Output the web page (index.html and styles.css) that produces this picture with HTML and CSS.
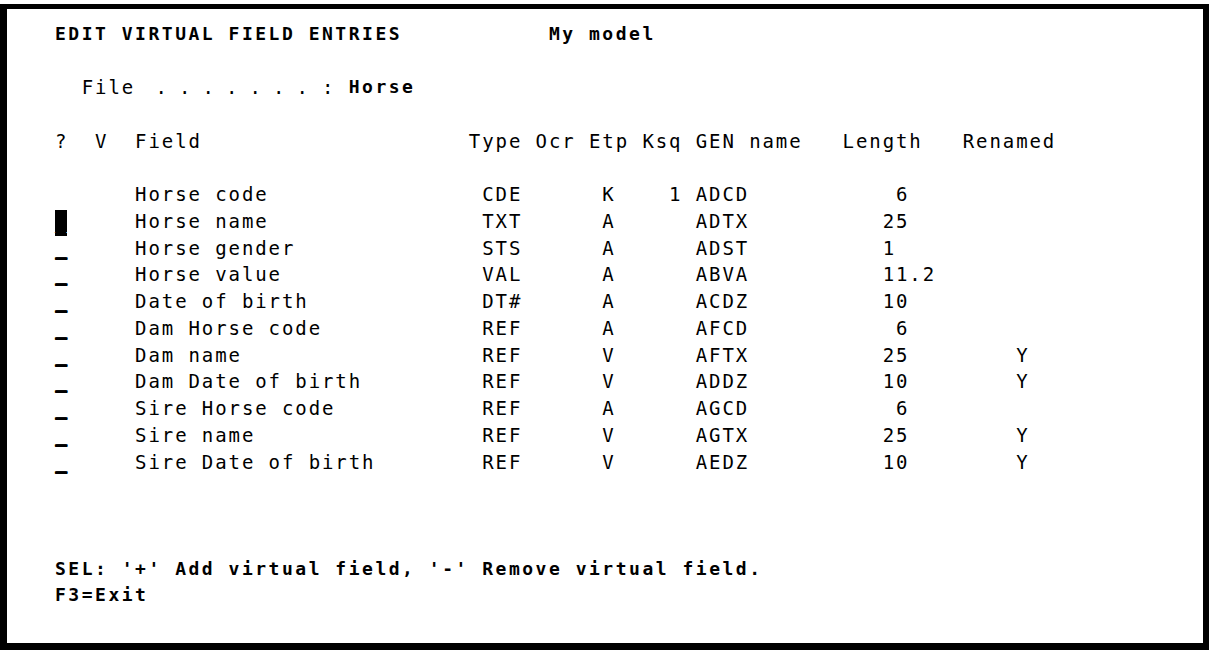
FILE: index.html
```html
<!DOCTYPE html>
<html lang="en">
<head>
<meta charset="utf-8">
<title>Edit Virtual Field Entries</title>
<link rel="stylesheet" href="styles.css">
</head>
<body>
<div class="screen">
  <div class="line b"><span>EDIT VIRTUAL FIELD ENTRIES</span><span class="model">My model</span></div>
  <div class="line file"><span>File </span><span class="dots">. . . . . . .</span><span>: </span><span class="val">Horse</span></div>

  <div class="row head">
    <span>?</span><span>V</span><span>Field</span><span>Type</span><span>Ocr</span><span>Etp</span><span>Ksq</span><span>GEN name</span><span>Length</span><span>Renamed</span>
  </div>

  <div class="rows">
    <div class="row"><span></span><span></span><span>Horse code</span><span class="p1">CDE</span><span></span><span class="p1">K</span><span class="p2">1</span><span>ADCD</span><span class="p4">6</span><span></span></div>
    <div class="row"><span><span class="cur">_</span></span><span></span><span>Horse name</span><span class="p1">TXT</span><span></span><span class="p1">A</span><span></span><span>ADTX</span><span class="p3">25</span><span></span></div>
    <div class="row"><span class="inp">_</span><span></span><span>Horse gender</span><span class="p1">STS</span><span></span><span class="p1">A</span><span></span><span>ADST</span><span class="p3">1</span><span></span></div>
    <div class="row"><span class="inp">_</span><span></span><span>Horse value</span><span class="p1">VAL</span><span></span><span class="p1">A</span><span></span><span>ABVA</span><span class="p3">11.2</span><span></span></div>
    <div class="row"><span class="inp">_</span><span></span><span>Date of birth</span><span class="p1">DT#</span><span></span><span class="p1">A</span><span></span><span>ACDZ</span><span class="p3">10</span><span></span></div>
    <div class="row"><span class="inp">_</span><span></span><span>Dam Horse code</span><span class="p1">REF</span><span></span><span class="p1">A</span><span></span><span>AFCD</span><span class="p4">6</span><span></span></div>
    <div class="row"><span class="inp">_</span><span></span><span>Dam name</span><span class="p1">REF</span><span></span><span class="p1">V</span><span></span><span>AFTX</span><span class="p3">25</span><span class="p4">Y</span></div>
    <div class="row"><span class="inp">_</span><span></span><span>Dam Date of birth</span><span class="p1">REF</span><span></span><span class="p1">V</span><span></span><span>ADDZ</span><span class="p3">10</span><span class="p4">Y</span></div>
    <div class="row"><span class="inp">_</span><span></span><span>Sire Horse code</span><span class="p1">REF</span><span></span><span class="p1">A</span><span></span><span>AGCD</span><span class="p4">6</span><span></span></div>
    <div class="row"><span class="inp">_</span><span></span><span>Sire name</span><span class="p1">REF</span><span></span><span class="p1">V</span><span></span><span>AGTX</span><span class="p3">25</span><span class="p4">Y</span></div>
    <div class="row"><span class="inp">_</span><span></span><span>Sire Date of birth</span><span class="p1">REF</span><span></span><span class="p1">V</span><span></span><span>AEDZ</span><span class="p3">10</span><span class="p4">Y</span></div>
  </div>

  <div class="footer">
    <div class="line b"><span>SEL: '+' Add virtual field, '-' Remove virtual field.</span></div>
    <div class="line b"><span>F3=Exit</span></div>
  </div>
</div>
</body>
</html>
```

FILE: styles.css
```css
:root {
  --c: 13.35px;
  --lh: 26.75px;
}

* { box-sizing: border-box; }

html, body {
  margin: 0;
  padding: 0;
  background: #fff;
}

body {
  font-family: "DejaVu Sans Mono", "Liberation Mono", monospace;
  font-size: 19px;
  line-height: var(--lh);
  color: #000;
}

.screen {
  width: 1209px;
  height: 646px;
  margin-top: 4px;
  border-style: solid;
  border-color: #000;
  border-width: 5px 6px 7px 7px;
  padding: 11.6px 0 0 48px;
  letter-spacing: 1.911px;
  overflow: hidden;
}

.line > span,
.row > span {
  white-space: pre;
}

.line {
  display: flex;
  height: var(--lh);
}

.b,
.val {
  font-weight: 700;
  font-size: 18px;
  letter-spacing: 2.513px;
}

.model {
  margin-left: calc(var(--c) * 11);
}

.file {
  margin-top: var(--lh);
  padding-left: calc(var(--c) * 2);
}

.dots {
  width: calc(var(--c) * 13);
  padding-left: 7px;
  letter-spacing: 0.31px;
}

.row {
  display: grid;
  grid-template-columns:
    calc(var(--c) * 3) calc(var(--c) * 3) calc(var(--c) * 25)
    calc(var(--c) * 5) calc(var(--c) * 4) calc(var(--c) * 4)
    calc(var(--c) * 4) calc(var(--c) * 11) calc(var(--c) * 9) auto;
  height: var(--lh);
}

.head {
  margin-top: var(--lh);
}

.rows {
  margin-top: var(--lh);
}

.p1 { padding-left: var(--c); }
.p2 { padding-left: calc(var(--c) * 2); }
.p3 { padding-left: calc(var(--c) * 3); }
.p4 { padding-left: calc(var(--c) * 4); }

.inp {
  font-weight: 700;
  text-shadow: 0 -1px 0 #000, 1px -1px 0 #000, 1px 0 0 #000;
}

.cur {
  padding-bottom: 4px;
  color: #000;
  background:
    linear-gradient(#000, #000) 0 0 / 12px calc(100% - 4px) no-repeat,
    linear-gradient(#000, #000) 0 100% / 12px 3px no-repeat;
}

.footer {
  margin-top: calc(var(--lh) * 3);
}
```
